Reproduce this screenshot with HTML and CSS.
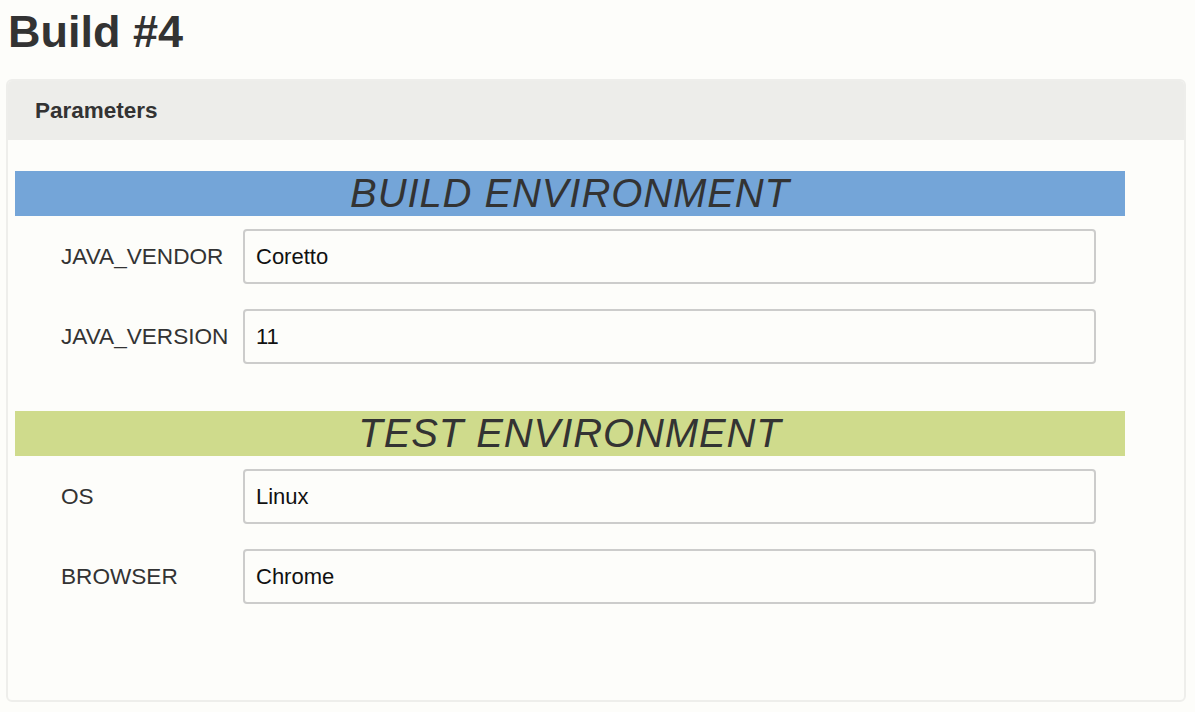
FILE: index.html
```html
<!DOCTYPE html>
<html>
<head>
<meta charset="utf-8">
<link rel="stylesheet" href="styles.css">
</head>
<body>
<h1 class="title">Build #4</h1>
<div class="panel">
  <div class="panel-header">Parameters</div>
  <div class="panel-body">
    <div class="section">
      <div class="band band-blue">BUILD ENVIRONMENT</div>
      <div class="rows">
        <div class="row"><div class="label">JAVA_VENDOR</div><div class="input">Coretto</div></div>
        <div class="row"><div class="label">JAVA_VERSION</div><div class="input">11</div></div>
      </div>
    </div>
    <div class="section">
      <div class="band band-green">TEST ENVIRONMENT</div>
      <div class="rows">
        <div class="row"><div class="label">OS</div><div class="input">Linux</div></div>
        <div class="row"><div class="label">BROWSER</div><div class="input">Chrome</div></div>
      </div>
    </div>
  </div>
</div>
</body>
</html>
```

FILE: styles.css
```css
html, body {
  margin: 0;
  padding: 0;
  background: #fdfdfa;
  font-family: "Liberation Sans", Arial, sans-serif;
  color: #333;
}
.title {
  margin: 7px 0 0 8px;
  font-size: 45px;
  line-height: 50px;
  font-weight: bold;
  color: #333;
}
.panel {
  margin: 22px 9px 0 6px;
  border: 2px solid #eeeeeb;
  border-radius: 6px;
  overflow: hidden;
  height: 623px;
  box-sizing: border-box;
}
.panel-header {
  background: #ededea;
  height: 59px;
  padding-left: 27px;
  display: flex;
  align-items: center;
  font-weight: bold;
  font-size: 22.5px;
  color: #333;
}
.panel-body {
  padding: 31px 0 0 7px;
  display: flex;
  flex-direction: column;
  gap: 47px;
}
.band {
  width: 1110px;
  height: 45px;
  line-height: 45px;
  text-align: center;
  font-style: italic;
  font-size: 40px;
  letter-spacing: 0.9px;
  color: #333;
}
.band-blue { background: #74a5d8; }
.band-green { background: #cfdb8c; }
.rows {
  margin-top: 13px;
  display: flex;
  flex-direction: column;
  gap: 25px;
  padding-left: 46px;
}
.row {
  display: flex;
  align-items: center;
  height: 55px;
}
.label {
  width: 182px;
  font-size: 22.6px;
  color: #333;
}
.input {
  width: 853px;
  height: 55px;
  box-sizing: border-box;
  border: 2px solid #cccccb;
  border-radius: 4px;
  padding-left: 11px;
  display: flex;
  align-items: center;
  font-size: 22px;
  color: #111;
  background: #fdfdfa;
}
```
